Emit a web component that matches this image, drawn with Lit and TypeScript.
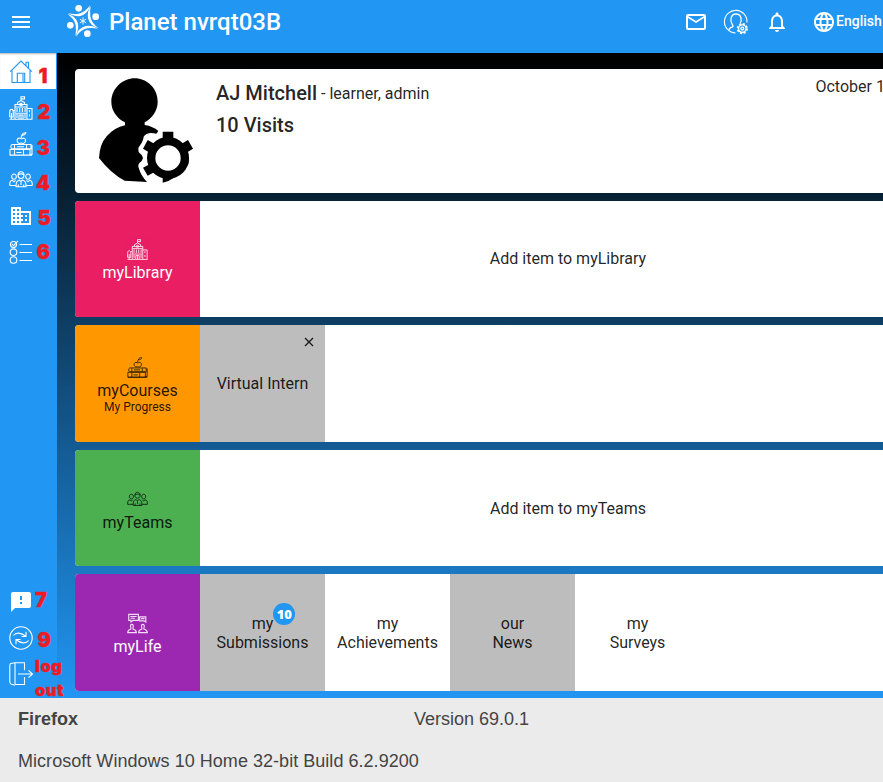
import { LitElement, html, css, svg, SVGTemplateResult } from "lit";
import { customElement, property } from "lit/decorators.js";

// Line icons share a 24-unit grid; solid ones carry their own fill.
const ICONS: Record<string, SVGTemplateResult> = {
  menu: svg`<path class="solid" d="M3 18h18v-2H3v2zm0-5h18v-2H3v2zm0-7v2h18V6H3z"/>`,
  mail: svg`<path class="solid" d="M22 6c0-1.100-.900-2-2-2H4c-1.100 0-2 .900-2 2v12c0 1.100.900 2 2 2h16c1.100 0 2-.900 2-2V6zm-2 0l-8 5-8-5h16zm0 12H4V8l8 5 8-5v10z"/>`,
  bell: svg`<path class="solid" d="M12 22c1.100 0 2-.900 2-2h-4c0 1.100.900 2 2 2zm6-6v-5c0-3.070-1.630-5.640-4.500-6.320V4c0-.830-.670-1.500-1.500-1.500s-1.500.670-1.500 1.500v.680C7.640 5.360 6 7.920 6 11v5l-2 2v1h16v-1l-2-2zm-2 1H8v-6c0-2.480 1.510-4.500 4-4.500s4 2.020 4 4.500v6z"/>`,
  globe: svg`<path class="solid" d="M11.990 2C6.470 2 2 6.480 2 12s4.470 10 9.990 10C17.520 22 22 17.520 22 12S17.520 2 11.990 2zm6.930 6h-2.950c-.320-1.250-.780-2.450-1.380-3.560 1.840.630 3.370 1.910 4.330 3.560zM12 4.040c.830 1.200 1.480 2.530 1.910 3.960h-3.820c.430-1.430 1.080-2.760 1.910-3.960zM4.260 14C4.100 13.360 4 12.690 4 12s.100-1.360.260-2h3.380c-.080.660-.140 1.320-.140 2s.060 1.340.140 2H4.260zm.820 2h2.950c.320 1.250.780 2.450 1.380 3.560-1.840-.630-3.370-1.900-4.330-3.560zm2.950-8H5.080c.960-1.660 2.490-2.930 4.330-3.560C8.810 5.550 8.350 6.750 8.030 8zM12 19.960c-.830-1.200-1.480-2.530-1.910-3.960h3.820c-.430 1.430-1.080 2.760-1.910 3.960zM14.340 14H9.660c-.090-.660-.160-1.320-.160-2s.070-1.350.160-2h4.680c.090.650.160 1.320.160 2s-.070 1.340-.160 2zm.250 5.560c.600-1.110 1.060-2.310 1.380-3.560h2.950c-.960 1.650-2.490 2.930-4.330 3.560zM16.360 14c.080-.660.140-1.320.140-2s-.060-1.340-.140-2h3.380c.160.640.260 1.310.260 2s-.100 1.360-.260 2h-3.380z"/>`,
  building: svg`<path class="solid" d="M12 7V3H2v18h20V7H12zM6 19H4v-2h2v2zm0-4H4v-2h2v2zm0-4H4V9h2v2zm0-4H4V5h2v2zm4 12H8v-2h2v2zm0-4H8v-2h2v2zm0-4H8V9h2v2zm0-4H8V5h2v2zm10 12h-8v-2h2v-2h-2v-2h2v-2h-2V9h8v10zm-2-8h-2v2h2v-2zm0 4h-2v2h2v-2z"/>`,
  feedback: svg`<path class="solid" d="M20 2H4c-1.100 0-1.990.900-1.990 2L2 22l4-4h14c1.100 0 2-.900 2-2V4c0-1.100-.900-2-2-2zm-7 12h-2v-2h2v2zm0-4h-2V6h2v4z"/>`,
  account: svg`<path d="M11.500 23A11.300 11.300 0 1 1 23 12.500"/><path d="M5 20.500c-.3-2 .5-2.700 3.500-3.500 1-.5.500-1.500-.3-2.600C5.800 11 6.500 4 12 4s6.200 6 4 9.500" stroke-width="1.300"/>
    <circle cx="18.300" cy="18.600" r="4.600" stroke-dasharray="2.100 1.500" stroke-width="2"/><circle cx="18.300" cy="18.600" r="3.700" stroke-width="1.300"/><circle cx="18.300" cy="18.600" r="1.400" stroke-width="1.300"/>`,
  home: svg`<path d="M1.200 11.700 12 1l10.800 10.700M3 10.500V22.500h18V10.500M17 5.500V2.200h2.500V8M8.300 22.500v-9.300h7.400v9.300M14 22v-8"/>`,
  school: svg`<path d="M12 4.500V.700h3.500v2.200H12M8.500 8V6.500l3.500-2 3.500 2V8M6 23V8.500h12V23M6 11h12M.500 23.300h23M6 14.500H4.500M18 12.500h5V23M.700 21v-4.500c0-4.300 3.600-4.300 3.600 0V21H.700M2.500 17v6M10 23v-4h4v4M12 19v4"/><circle cx="12" cy="8.500" r="1.300"/><path d="M8 12v4m2.700-4v4m2.700-4v4m2.700-4v4M8 18v4m8-4v4m4.500-8v2.200m0 2v2.300M6.500 17.200h11"/>`,
  books: svg`<path d="M11.500 6.500c-2-1-3.500.200-3.400 1.900.1 2 1.500 3.400 3 2.900.9-.300 1.400-.300 2.200 0 1.600.600 3.200-.900 3.200-2.900 0-1.800-1.500-2.900-3.200-1.900-.8.300-1.200.300-1.800 0zM12.200 6c0-2 .3-2.700 1.400-3.300M13 3C13.500 1.300 15 .600 16.800.800 16.600 2.300 15 3.400 13 3zM3 12.500h19v4.300H3c-1.500-.500-1.500-3.800 0-4.300zM1 17.500h20v5.500H1zM23 13v9.500h-2.500M5.500 13v3.500m12-3.500v3.500M5.500 18v5m9-5v5M8 14.700h7M7.500 20.500h5M1 23.200h22"/>`,
  teams: svg`<path d="M9 7.500c-.5-5 6.500-5 6 0-.3 4-5.700 4-6 0zM9 7c2-1.500 4-1.500 6 0"/><path d="M2.700 9c-.4-4 5-4 4.600 0-.3 3-4.300 3-4.600 0zM16.700 9c-.4-4 5-4 4.600 0-.3 3-4.300 3-4.600 0zM7 18.800c0-4.800.8-6 3.500-6.800l1.500 1.700 1.500-1.700c2.700.8 3.500 2 3.500 6.800zM.700 17.500c0-3.800.5-4.500 2.700-5.200L5 13.800l1.500-1.500M.700 17.500H7M23.300 17.500c0-3.800-.5-4.500-2.700-5.200L19 13.800l-1.500-1.500M23.300 17.500H17M9.300 16.500v2m5.400-2v2M12 14v3"/>`,
  survey: svg`<circle cx="4.500" cy="4.500" r="3"/><circle cx="4.500" cy="12.200" r="3.300"/><circle cx="4.500" cy="20" r="3.300"/><path d="m3 4 1.500 1.700L9 .800M10.500 4.500h12.500M10.500 12.500h12.500M10.500 20.500h12.500"/>`,
  sync: svg`<circle cx="12" cy="12" r="11.200"/><path d="M4.500 9.500C6.500 6.300 12 6 17 10.500M12.500 10.500H17V5.800M19.500 14.500C17.500 17.700 12 18 7 13.500M11.500 13.500H7v4.700"/>`,
  logout: svg`<path d="M6 .800h9.500v7.500M15.500 15v7.500H6M6 .800v21.500M6 .800 1.800 1.500C.900 2 .800 2.500.800 3.500v16c0 1.500.2 2 1.200 2.500l4 1.200M6 4v16M9 12h14M19.500 8.300l4 3.700-4 3.700"/>`,
  chat: svg`<path d="M2 1.500h11v7H7L4.500 10.300V8.500H2zM14.500 4.500h7v6l-2-1.500h-5zM4 4h7M4 6h5M16 6.500h4M.800 22.500c0-3 1.200-3.500 3.700-4.200v-1.300c-2.500-5.300 4.700-5.300 2.300 0v1.300C9.300 19 10.700 19.500 10.700 22.500zM13.300 22.500c0-3 1.200-3.500 3.700-4.200v-1.300c-2.500-5.300 4.700-5.300 2.300 0v1.300c2.500.700 3.900 1.200 3.900 4.200z" stroke-width="1.300"/>`,
};

@customElement("ui-icon")
export class UiIcon extends LitElement {
  @property() name = "";
  static styles = css`
    :host { display: block; width: 24px; height: 24px; flex: none; }
    svg { display: block; width: 100%; height: 100%; fill: none; stroke: currentColor; stroke-width: 1.100; overflow: visible; }
    .solid { fill: currentColor; stroke: none; }
  `;
  render() {
    return html`<svg viewBox="0 0 24 24">${ICONS[this.name]}</svg>`;
  }
}

@customElement("planet-logo")
export class PlanetLogo extends LitElement {
  static styles = css`
    :host { display: block; width: 34px; height: 34px; }
    svg { display: block; fill: #fff; }
    .ray { stroke: #fff; stroke-width: 2.800; fill: none; }
  `;
  render() {
    const arm = (deg: number) => svg`<g transform="rotate(${deg} 51 51)">
      <circle cx="38" cy="13" r="10"/>
      <path d="M6 28Q22 31 38 29 58 25 72 4 67 30 43 36 22 39 6 28Z"/></g>`;
    return html`<svg width="34" height="34" viewBox="0 0 102 102">
      ${[0, 90, 180, 270].map(arm)}
      <path class="ray" d="M51 40v22M41.500 45.500l19 11M41.500 56.500l19-11"/>
    </svg>`;
  }
}

@customElement("user-avatar")
export class UserAvatar extends LitElement {
  static styles = css`
    :host { display: block; }
    svg { display: block; }
    .ring { fill: none; stroke: #000; stroke-width: 25; }
  `;
  render() {
    return html`<svg width="96.700" height="106.700" viewBox="70 50 290 320">
      <path d="M180 54C215 54 249 82 249 124 249 152 232 174 210 186L210 194Q235 198 251 212L245 220Q217 213 207 229 206 242 192 261 187 275 201 284L205 293 201 302Q186 312 193 325 198 344 217 365L150 361Q108 339 73 293 75 252 96 228 120 201 151 195L151 186C126 173 110 151 110 124 111 83 145 54 180 54Z"/>
      <circle class="ring" cx="280" cy="293" r="50.500"/>
      <path d="M264 237V214h32v23zM321 250l19-11 15 26-20 12zM239 250l-20-11-14 26 20 12zM226 311l-21 11 14 24 22-12zM264 345v22q20-4 37-17zM317 334q20-15 24-22l2-19-15-6z"/>
    </svg>`;
  }
}

interface Tile { lines: string[]; grey?: boolean; closable?: boolean; badge?: number; }
interface Shelf { name: string; icon: string; tone: string; sub?: string; tiles?: Tile[]; }

const SHELVES: Shelf[] = [
  { name: "myLibrary", icon: "school", tone: "pink" },
  { name: "myCourses", icon: "books", tone: "orange", sub: "My Progress", tiles: [{ lines: ["Virtual Intern"], grey: true, closable: true }] },
  { name: "myTeams", icon: "teams", tone: "green" },
  { name: "myLife", icon: "chat", tone: "purple", tiles: [
    { lines: ["my", "Submissions"], grey: true, badge: 10 },
    { lines: ["my", "Achievements"] },
    { lines: ["our", "News"], grey: true },
    { lines: ["my", "Surveys"] },
  ] },
];

@customElement("shelf-row")
export class ShelfRow extends LitElement {
  @property({ attribute: false }) shelf!: Shelf;
  static styles = css`
    :host { display: flex; min-height: 0; background: #fff; border-radius: 4px; overflow: hidden; font-size: 16px; line-height: 19px; color: rgba(0,0,0,.87); }
    .label { width: 125px; flex: none; display: flex; flex-direction: column; align-items: center; justify-content: center; padding-top: 3px; box-sizing: border-box; }
    .label ui-icon { width: 21px; height: 21px; margin-bottom: 3px; opacity: .85; }
    .label.pink { background: #e91e63; color: #fff; }
    .label.orange { background: #ff9800; }
    .label.green { background: #4caf50; padding-top: 5px; }
    .label.purple { background: #9c27b0; color: #fff; padding-top: 4px; }
    .sub { font-size: 12px; line-height: 14px; }
    .tile { width: 125px; flex: none; display: flex; flex-direction: column; align-items: center; justify-content: center; position: relative; }
    .grey { background: #bdbdbd; }
    .line { position: relative; }
    .close { position: absolute; top: 12px; right: 11px; width: 10px; height: 10px; stroke: rgba(0,0,0,.87); stroke-width: 1.300; }
    .badge { position: absolute; left: 100%; bottom: 8px; width: 22px; height: 22px; border-radius: 50%; background: #2196f3; color: #fff; font: 800 13px/22px "Open Sans", sans-serif; text-align: center; }
    .empty { flex: 1; display: flex; align-items: center; justify-content: center; }
    .pink + .empty { padding-bottom: 1px; }
    .green + .empty { padding-top: 1px; }
  `;
  render() {
    const s = this.shelf;
    return html`
      <div class="label ${s.tone}"><ui-icon name=${s.icon}></ui-icon><span>${s.name}</span>${s.sub ? html`<span class="sub">${s.sub}</span>` : ""}</div>
      ${s.tiles
        ? s.tiles.map((t) => html`<div class="tile ${t.grey ? "grey" : ""}">
            ${t.closable ? html`<svg class="close" viewBox="0 0 10 10"><path d="M1 1l8 8M9 1l-8 8"/></svg>` : ""}
            ${t.lines.map((l, i) => html`<span class="line">${l}${t.badge && i === 0 ? html`<span class="badge">${t.badge}</span>` : ""}</span>`)}
          </div>`)
        : html`<div class="empty">Add item to ${s.name}</div>`}
    `;
  }
}

// x and y place each red annotation inside its navigation item.
interface NavItem { icon: string; mark: string; x: number; y: number; active?: boolean; small?: boolean; }
const NAV: NavItem[] = [
  { icon: "home", mark: "1", x: 38.5, y: 12, active: true },
  { icon: "school", mark: "2", x: 37.5, y: 12 },
  { icon: "books", mark: "3", x: 36.5, y: 12 },
  { icon: "teams", mark: "4", x: 36, y: 11 },
  { icon: "building", mark: "5", x: 37.5, y: 10 },
  { icon: "survey", mark: "6", x: 36.5, y: 8 },
];
const NAV_END: NavItem[] = [
  { icon: "feedback", mark: "7", x: 35, y: 5 },
  { icon: "sync", mark: "9", x: 37.5, y: 9 },
  { icon: "logout", mark: "log\nout", x: 35, y: -2, small: true },
];

@customElement("app-root")
export class AppRoot extends LitElement {
  static styles = css`
    :host { display: flex; flex-direction: column; width: 100%; height: 782px; overflow: hidden; font-family: Roboto, sans-serif; color: rgba(0,0,0,.87); }
    header { height: 53px; flex: none; background: #2196f3; color: #fff; display: flex; align-items: flex-start; padding-left: 9px; box-sizing: border-box; white-space: nowrap; }
    header ui-icon { margin-top: 10px; }
    planet-logo { margin: 4px 9px 0 33px; }
    .title { font-size: 24px; font-weight: 500; line-height: 44px; width: 575px; flex: none; }
    .account { margin-left: 16px; }
    .bell { margin-left: 16.500px; }
    .globe { margin-left: 23.500px; }
    .lang { font-size: 14px; font-weight: 500; line-height: 42px; }
    .body { height: 645px; flex: none; display: flex; background: linear-gradient(#000, #000 1%, #2196f3); }
    nav { width: 57px; flex: none; background: #2196f3; display: flex; flex-direction: column; padding-bottom: 6px; box-sizing: border-box; color: #fff; }
    .item { height: 36px; width: 56px; display: flex; align-items: center; padding: 1.500px 0 0 9px; box-sizing: border-box; position: relative; }
    .end { padding-top: 0; }
    .active { background: #fff; color: #2196f3; box-shadow: inset 0 2px 2px -1px rgba(0,0,0,.3); }
    .push { margin-top: auto; }
    .mark { position: absolute; color: #ed1c24; font: 900 20px/22px Inter, "Open Sans", sans-serif; -webkit-text-stroke: .300px #ed1c24; white-space: pre; z-index: 1; }
    .small { font-size: 16.500px; line-height: 24px; letter-spacing: .500px; }
    main { width: 861px; flex: none; margin-left: 18px; padding-top: 16px; box-sizing: border-box; display: grid; grid-template-rows: 124px 116px 117px 116px 117px; gap: 8px; align-content: start; }
    .profile { background: #fff; border-radius: 4px; display: flex; padding: 7.700px 0 0 23.300px; box-sizing: border-box; }
    .who { margin-left: 21px; font-size: 20px; font-weight: 500; line-height: 32px; width: 599.500px; flex: none; }
    .roles { font-size: 16px; font-weight: 400; line-height: 1; vertical-align: 1px; }
    .date { font-size: 16px; line-height: 19px; white-space: nowrap; }
    footer { flex: 1; background: #ebebeb; color: #444; font: 18px/22px "Liberation Sans", Arial, sans-serif; padding: 10px 18px; display: grid; grid-template-columns: 396px 1fr; row-gap: 20px; align-content: start; }
    .os { grid-column: 1 / 3; letter-spacing: .035px; }
  `;
  private item = (n: NavItem, i: number, end = false) => html`
    <div class="item ${n.active ? "active" : ""} ${end ? "end" : ""} ${end && i === 0 ? "push" : ""}">
      <ui-icon name=${n.icon}></ui-icon><span class="mark ${n.small ? "small" : ""}" style="left:${n.x}px;top:${n.y}px">${n.mark}</span>
    </div>`;
  render() {
    return html`
      <header>
        <ui-icon name="menu"></ui-icon>
        <planet-logo></planet-logo>
        <div class="title">Planet nvrqt03B</div>
        <ui-icon name="mail"></ui-icon>
        <ui-icon class="account" name="account"></ui-icon>
        <ui-icon class="bell" name="bell"></ui-icon>
        <ui-icon class="globe" name="globe"></ui-icon>
        <div class="lang">English</div>
      </header>
      <div class="body">
        <nav>${NAV.map((n, i) => this.item(n, i))}${NAV_END.map((n, i) => this.item(n, i, true))}</nav>
        <main>
          <section class="profile">
            <user-avatar></user-avatar>
            <div class="who">
              <div>AJ Mitchell<span class="roles"> - learner, admin</span></div>
              <div>10 Visits</div>
            </div>
            <div class="date">October 1</div>
          </section>
          ${SHELVES.map((s) => html`<shelf-row .shelf=${s}></shelf-row>`)}
        </main>
      </div>
      <footer><b>Firefox</b><span>Version 69.0.1</span><span class="os">Microsoft Windows 10 Home 32-bit Build 6.2.9200</span></footer>
    `;
  }
}
